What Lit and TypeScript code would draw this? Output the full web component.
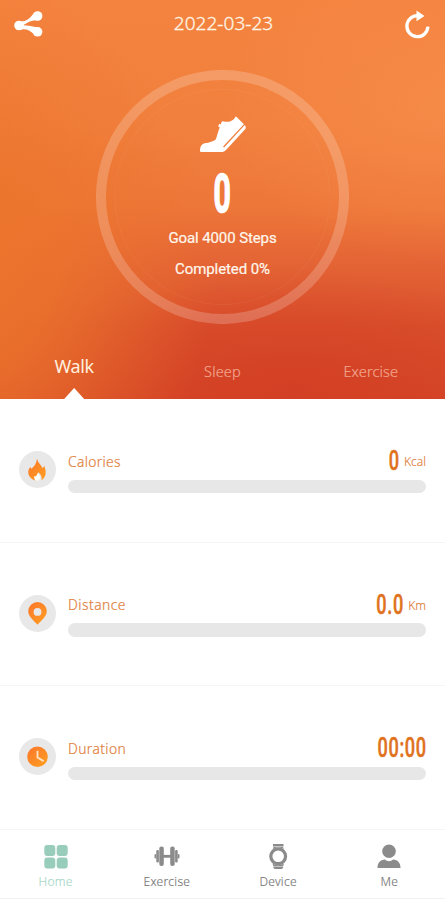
import { LitElement, html, css, svg } from "lit";
import { customElement } from "lit/decorators.js";
import { classMap } from "lit/directives/class-map.js";

const flame = svg`<path fill="url(#warm)" d="M17.500 7.500c1 4 3.600 5.500 5.300 9 1.100-.5 1.500-1.500 1.600-2.500 2.600 5.500 2 11.500-2.400 14.400.5-3-.7-5.500-3.100-7.900-.2 2-1.200 3-2 4-.9 1.300-.8 2.700-.6 4.300-4.800-1.300-7.300-4.500-7.300-8.300 0-2.200 1-3.800 2-5l.9 1.800c3-2 5.100-5 5.600-9.800z"/><path fill="#fff" d="M16.500 28.800c-1.700-1-2.200-3-1.300-4.800l1 .7c1.300-1 1.800-2 1.900-3.200 2.600 2.500 3 5.300 1.300 7.300z"/>`;
const pin = svg`<path fill="url(#warm)" fill-rule="evenodd" d="M18 29c-4-4.700-9-8-9-13.200a9 9 0 0 1 18 0c0 5.200-5 8.500-9 13.200zM18 12.700a3.800 3.800 0 1 0 0 7.600 3.800 3.800 0 0 0 0-7.600z"/>`;
const clock = svg`<circle cx="18" cy="18.200" r="10" fill="url(#warm)"/><path d="M18 12.500v6.500l6 3.500" fill="none" stroke="#ffe4c4" stroke-width="1.800"/>`;

const metrics = [
  { name: "Calories", value: "0", unit: "Kcal", icon: flame, cls: "calories" },
  { name: "Distance", value: "0.0", unit: "Km", icon: pin, cls: "distance" },
  { name: "Duration", value: "00:00", unit: "", icon: clock, cls: "duration" },
];

const navItems = [
  { name: "Home", cls: "home", icon: svg`<rect x="2.300" y="2" width="11" height="11" rx="3"/><rect x="14.700" y="2" width="11" height="11" rx="3"/><rect x="2.300" y="14.500" width="11" height="11" rx="3"/><rect x="14.700" y="14.500" width="11" height="11" rx="3"/>` },
  { name: "Exercise", cls: "exercise", icon: svg`<rect x="6.300" y="3.500" width="4.500" height="19.500" rx="2"/><rect x="17.200" y="3.500" width="4.500" height="19.500" rx="2"/><rect x="3.300" y="7" width="2.600" height="12.500" rx="1"/><rect x="22.100" y="7" width="2.600" height="12.500" rx="1"/><rect x="1.500" y="11" width="1.800" height="4.500" rx=".9"/><rect x="24.700" y="11" width="1.800" height="4.500" rx=".9"/><rect x="10" y="11.900" width="8" height="2.800"/>` },
  { name: "Device", cls: "device", icon: svg`<path d="M9 1h10.500v2.500H9zM9.500 4h9.500l1 3H8.500zM8.500 20.500H20l-1 3H9.500zM9 24h10.500l-1.500 2h-7.500z"/><circle cx="14.200" cy="13.300" r="9" fill="#fff"/><circle cx="14.200" cy="13.300" r="7.400" fill="none" stroke="currentColor" stroke-width="3.200"/>` },
  { name: "Me", cls: "me", icon: svg`<circle cx="14" cy="8.200" r="6.800"/><path d="M2.500 25c0-5 2.500-8 7.500-8.400 2 2.100 6 2.100 8 0 5 .4 7.500 3.400 7.500 8.400z"/>` },
];

@customElement("app-root")
export class AppRoot extends LitElement {
  static styles = css`
    :host {
      display: flex;
      flex-direction: column;
      width: 100%;
      height: 900px;
      overflow: hidden;
      background: #fff;
      font-family: "Noto Sans", "Open Sans", sans-serif;
    }
    * { box-sizing: border-box; }
    svg { display: block; flex: none; }
    .hero {
      height: 399px;
      flex: none;
      display: flex;
      flex-direction: column;
      color: #fff;
      background:
        radial-gradient(ellipse 60% 75% at -12% 68%, #ec752c 0%, rgba(236, 117, 44, 0.8) 40%, rgba(236, 117, 44, 0.3) 75%, rgba(236, 117, 44, 0) 100%),
        radial-gradient(ellipse 50% 40% at 100% 26%, rgba(248, 142, 75, 0.7), rgba(248, 142, 75, 0)),
        radial-gradient(ellipse 55% 30% at 66% 97%, rgba(210, 58, 34, 0.6), rgba(210, 58, 34, 0)),
        linear-gradient(#f4833f 0%, #f1803e 32%, #ed7639 52%, #e46435 66%, #d94f2c 82%, #d54627 100%);
    }
    .top {
      height: 47px;
      display: flex;
      justify-content: space-between;
      align-items: center;
      padding: 0 14px 0 14px;
    }
    .date {
      font: 300 19px/24px "Noto Sans", sans-serif;
      letter-spacing: 0.05px;
      white-space: nowrap;
      color: #fff5e4;
      padding-bottom: 1px;
      -webkit-text-stroke: 0.3px #fff5e4;
    }
    .ring {
      width: 253px;
      height: 254px;
      margin: 23px auto 0;
      border: 10px solid rgba(255, 255, 255, 0.2);
      border-radius: 50%;
      display: flex;
      flex-direction: column;
      align-items: center;
      font: 400 15px/20px Roboto, sans-serif;
      background: radial-gradient(circle closest-side, transparent 91.600%, rgba(255, 255, 255, 0.05) 92.300%, transparent 93%);
    }
    .shoe { margin-top: 36px; }
    .steps {
      font: 700 53px/56px Roboto, sans-serif;
      height: 56px;
      margin-top: 10px;
      transform: scaleX(0.57);
      -webkit-text-stroke: 1.500px #fff;
    }
    .goal, .completed {
      color: #fff7ec;
      white-space: nowrap;
      -webkit-text-stroke: 0.2px #fff7ec;
    }
    .goal { margin-top: 6px; letter-spacing: -0.1px; }
    .completed { margin-top: 11px; letter-spacing: -0.1px; }
    .tabs {
      margin-top: auto;
      height: 52px;
      display: grid;
      grid-template-columns: repeat(3, 1fr);
      text-align: center;
    }
    .tab {
      font-size: 14.500px;
      line-height: 20px;
      padding-top: 14px;
      letter-spacing: 0.15px;
      font-weight: 300;
      color: #f2a58d;
      -webkit-text-stroke: 0.2px #f2a58d;
    }
    .tab.active {
      display: flex;
      flex-direction: column;
      align-items: center;
      padding-top: 7px;
      font-size: 18px;
      line-height: 24px;
      letter-spacing: -0.35px;
      font-weight: 400;
      color: #fff0df;
      -webkit-text-stroke: 0;
    }
    .notch {
      width: 20px;
      height: 11px;
      margin-top: auto;
      background: #fff;
      clip-path: polygon(50% 0, 100% 100%, 0 100%);
    }
    .metric {
      height: 143.500px;
      flex: none;
      display: flex;
      padding: 0 19px;
      border-bottom: 1px solid #f5f5f5;
    }
    .disc { margin: 52px 12px 0 0; }
    .body { flex: 1; padding-top: 44.500px; }
    .line {
      height: 36px;
      display: flex;
      justify-content: space-between;
      align-items: center;
      color: #e07e3c;
    }
    .name {
      font-size: 13.800px;
      font-weight: 300;
      line-height: 20px;
      letter-spacing: 0.35px;
      -webkit-text-stroke: 0.2px #e07e3c;
    }
    .duration .name { letter-spacing: 0.4px; }
    .distance .name { letter-spacing: 0.5px; }
    .amount { display: flex; align-items: center; }
    .value {
      font: 500 27.500px/32px Roboto, sans-serif;
      color: #df7220;
      transform: scaleX(0.66);
      transform-origin: right center;
      white-space: nowrap;
      padding-bottom: 1px;
      letter-spacing: 1px;
      margin-right: -0.6px;
      -webkit-text-stroke: 0.5px #df7220;
    }
    .unit {
      font-size: 12px;
      font-weight: 300;
      margin-left: 5px;
      -webkit-text-stroke: 0.15px #e07e3c;
    }
    .bar {
      height: 13.500px;
      border-radius: 7px;
      background: #e7e7e7;
    }
    .nav {
      height: 69.500px;
      flex: none;
      display: grid;
      grid-template-columns: repeat(4, 1fr);
      border-bottom: 1px solid #f2f2f2;
    }
    .item {
      display: flex;
      flex-direction: column;
      align-items: center;
      padding-top: 13px;
      color: #8b8b8b;
      font-size: 12px;
      line-height: 18px;
      font-weight: 300;
    }
    .item span { margin-top: 2px; letter-spacing: 0.3px; color: #777; -webkit-text-stroke: 0.15px #777; }
    .item.home { color: #98cdbb; }
    .item.home span { color: #a8d8c9; -webkit-text-stroke-color: #a8d8c9; }
    .item svg { fill: currentColor; }
  `;

  render() {
    return html`
      <header class="hero">
        <div class="top">
          <svg width="30" height="30" viewBox="0 0 30 30" fill="#fff">
            <circle cx="5" cy="16.500" r="4.800"/><circle cx="23.600" cy="7" r="4.800"/><circle cx="23.600" cy="22.800" r="4.800"/>
            <path d="M4 12C10 13.500 15 11 19.500 4.500l4.500 7C18 10.500 14 13.500 9 16.200c5 .5 10 .8 15 2.300l-3.500 7.500C16 20.500 11 19 4 21z"/>
          </svg>
          <span class="date">2022-03-23</span>
          <svg width="28" height="30" viewBox="0 0 28 30">
            <path d="M14.500 6.700a10.500 10.500 0 1 0 10.400 11" fill="none" stroke="#fff" stroke-width="3.300"/>
            <path fill="#fff" d="M13.500 1.500 21.500 7 13.500 12.300z"/>
          </svg>
        </div>
        <section class="ring">
          <svg class="shoe" width="46" height="40" viewBox="0 0 46 40" fill="#fff">
            <path d="M0 34.500c.1-4 1.300-6.300 4.500-7.200 5-.8 9.200-2 11-3.600 1.300-2 2-6.700 3.200-9.500l1-3-1.500-.7 1-2.800 1.500.8.900-2.500c.2-.8 1.100-1 1.800-.6 4.200 1 7.500.3 10.700-2.500l1-1.700c.4-.6 1.200-.5 1.800 0l7 7-20.800 22.400 1 1L44.800 9l.8 1.400c.3 1 .2 2-.5 2.800L26.500 33.400c-2 2-3 2.600-5.500 2.600H1.500C.5 36 0 35.500 0 34.500z"/>
          </svg>
          <div class="steps">0</div>
          <div class="goal">Goal 4000 Steps</div>
          <div class="completed">Completed 0%</div>
        </section>
        <div class="tabs">
          <div class="tab active">Walk<i class="notch"></i></div>
          <div class="tab">Sleep</div>
          <div class="tab">Exercise</div>
        </div>
      </header>
      ${metrics.map(
        (m) => html`
          <section class=${classMap({ metric: true, [m.cls]: true })}>
            <svg class="disc" width="37" height="37" viewBox="0 0 36 36">
              <defs>
                <linearGradient id="warm" x1="0" y1="0" x2=".8" y2="1">
                  <stop offset="0" stop-color="#fb762b"/><stop offset="1" stop-color="#ff9c22"/>
                </linearGradient>
              </defs>
              <circle cx="18" cy="18" r="18" fill="#e8e8e8"/>${m.icon}
            </svg>
            <div class="body">
              <div class="line">
                <span class="name">${m.name}</span>
                <span class="amount">
                  <span class="value">${m.value}</span>
                  ${m.unit ? html`<span class="unit">${m.unit}</span>` : ""}
                </span>
              </div>
              <div class="bar"></div>
            </div>
          </section>`
      )}
      <nav class="nav">
        ${navItems.map(
          (n) => html`
            <div class=${classMap({ item: true, [n.cls]: true })}>
              <svg width="28" height="28" viewBox="0 0 28 28">${n.icon}</svg>
              <span>${n.name}</span>
            </div>`
        )}
      </nav>
    `;
  }
}
